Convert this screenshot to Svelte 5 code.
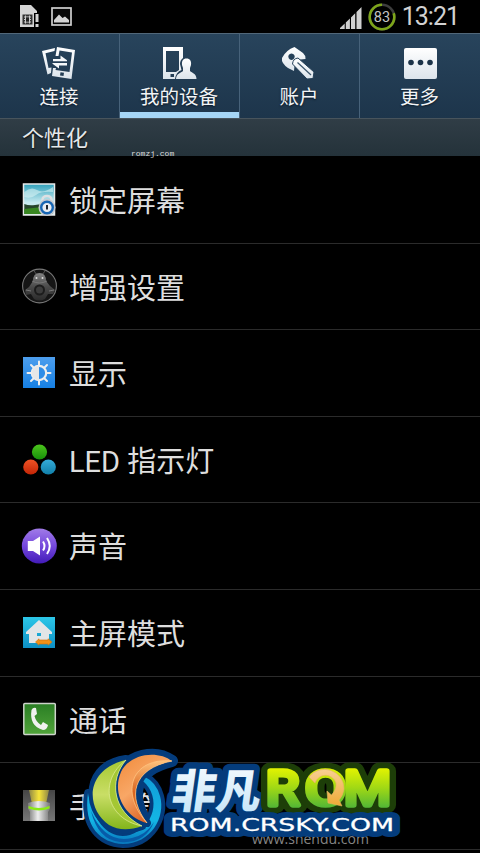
<script>
  const tabs = [
    { icon: "connect", label: "连接" },
    { icon: "device", label: "我的设备" },
    { icon: "account", label: "账户" },
    { icon: "more", label: "更多" }
  ];
  const items = [
    { icon: "lock", label: "锁定屏幕" },
    { icon: "enhance", label: "增强设置" },
    { icon: "display", label: "显示" },
    { icon: "led", label: "LED 指示灯" },
    { icon: "sound", label: "声音" },
    { icon: "home", label: "主屏模式" },
    { icon: "call", label: "通话" },
    { icon: "torch", label: "手电筒" }
  ];
  const letters = [
    { char: "R", x: 266, width: 33 },
    { char: "O", x: 305, width: 41 },
    { char: "M", x: 344, width: 47 }
  ];
  let active = $state("device");
</script>

<div class="screen">
  <header class="status">
    <div class="notes">
      <svg width="19" height="23" viewBox="0 0 19 23">
        <path d="M0 0H11L17 6V8H14V22H0Z" fill="#d4d4d4" />
        <rect x="2.5" y="9.500" width="10" height="10" fill="#333" />
        <path d="M4 12h7M4 14.500h7M4 17h7M5.500 10.500v8M9.500 10.500v8" stroke="#ccc" />
        <rect x="6" y="12.500" width="3" height="4" fill="#222" />
        <path d="M15.500 9h3v8h-3zM15.500 19h3v3h-3z" fill="#d4d4d4" />
      </svg>
      <svg width="21" height="19" viewBox="0 0 21 19">
        <rect x="1" y="1" width="19" height="17" fill="#080808" stroke="#cfcfcf" stroke-width="1.700" />
        <path d="M3 15.500V13L8 7.500L11.500 11L14 9.500L18 13V15.500Z" fill="#d4d4d4" />
      </svg>
    </div>
    <div class="right">
      <svg width="22" height="22" viewBox="0 0 22 22" fill="#d0d0d0">
        <path d="M0 22V21L4.700 16.500V22ZM5.800 22V15.500L9.900 11.500V22ZM11 22V10.500L15.200 6.300V22ZM16.500 22V5L21.500 0V22Z" />
      </svg>
      <svg class="battery" width="28" height="28" viewBox="0 0 28 28">
        <circle cx="14" cy="14" r="12.300" fill="none" stroke="#3d3d3d" stroke-width="2.500" />
        <circle cx="14" cy="14" r="12.300" fill="none" stroke="#7da51a" stroke-width="2.600" pathLength="100" stroke-dasharray="80 20" stroke-dashoffset="-20" transform="rotate(-90 14 14)" />
        <text x="14" y="19" text-anchor="middle">83</text>
      </svg>
      <time>13:21</time>
    </div>
  </header>

  <nav>
    {#each tabs as tab}
      <button class:active={active === tab.icon} onclick={() => (active = tab.icon)}>
        <svg width="38" height="36" viewBox="0 0 38 36">
          <defs>
            <linearGradient id="metal-{tab.icon}" x2="0" y2="1">
              <stop stop-color="#fff" />
              <stop offset="1" stop-color="#dce4eb" />
            </linearGradient>
          </defs>
          {#if tab.icon === "connect"}
            <path fill="url(#metal-connect)" d="M2 5L15 2L14.500 5L5.500 7.200L8.500 22L11.500 21.500L11 27L7.500 28.500Z" />
            <path fill="url(#metal-connect)" fill-rule="evenodd" d="M17 1L35 4L31.500 33L12 30L13 22H16L15.500 24L29.500 26L32 6.500L19.500 4.500L18.500 10H15.500ZM20.500 26.200L20 29.500L23.500 30L24 26.700Z" />
            <path fill="#f5f8fa" d="M13 13H20.500V9.500L27 14.200V15.200H13ZM27 17V19.500H19V22.500L12.500 17.800V17Z" />
          {:else if tab.icon === "device"}
            <path fill="url(#metal-device)" fill-rule="evenodd" d="M3 1H23V12Q20 14 20 18L21.500 24Q16 26 15 33H3ZM6 5V26H16L19 24V5ZM10.500 28V31H14V28Z" />
            <path fill="url(#metal-device)" d="M26.500 12.500C30 12.500 31.500 15 31 19L30 22V25C32 27 36.500 27.500 36.500 33H16C16 27.500 21 27 23 25V22L22 19C21.500 15 23 12.500 26.500 12.500Z" />
          {:else if tab.icon === "account"}
            <path fill="url(#metal-account)" fill-rule="evenodd" d="M14.500 1L23 7Q25.500 9 25.500 13L15 14L14 25L8 22Q1 17 2 12Q6 4 14.500 1ZM11.500 7.500A3.200 3.200 0 1 0 11.510 7.500Z" />
            <path fill="url(#metal-account)" stroke="#244058" stroke-width="1" d="M12.500 18Q13 12.500 18 12L34 26L33 32.500L27 33Z" />
            <path d="M17.500 16.500L31 29" stroke="#3c566b" stroke-width="1.200" />
          {:else}
            <rect x="3" y="2" width="33" height="31" rx="2" fill="url(#metal-more)" />
            <g fill="#1c3348">
              <circle cx="10" cy="16.500" r="2.800" />
              <circle cx="19.500" cy="16.500" r="2.800" />
              <circle cx="29" cy="16.500" r="2.800" />
            </g>
          {/if}
        </svg>
        <span>{tab.label}</span>
      </button>
    {/each}
  </nav>

  <h2>个性化</h2>

  <ul>
    {#each items as item}
      <li>
        <svg width="36" height="36" viewBox="0 0 36 36">
          {#if item.icon === "lock"}
            <defs>
              <linearGradient id="sky" x2="0" y2="1">
                <stop stop-color="#2fa0ba" />
                <stop offset=".6" stop-color="#c8ebf0" />
              </linearGradient>
            </defs>
            <rect x="2.500" y="2" width="31" height="31" fill="url(#sky)" stroke="#e8eaea" stroke-width="1.500" />
            <path d="M3.300 10Q10 4 16 8T32 5V10Q20 9 15 13T3.300 15Z" fill="#d8f3f5" opacity=".6" />
            <path d="M3.300 22Q8 24 14 23T32 22V32H3.300Z" fill="#27452b" />
            <path d="M3.300 27L21 25V32H3.300Z" fill="#388621" />
            <path d="M21.500 20V17.500Q22 14 26 14T30.500 17.500V20" fill="none" stroke="#dcdfe2" stroke-width="2.500" />
            <circle cx="26" cy="25.500" r="8.500" fill="#c5c9cf" />
            <circle cx="26" cy="25.500" r="5.800" fill="#e9edf2" stroke="#1766b4" stroke-width="2.400" />
            <path d="M26 23v4.500" stroke="#1c2531" stroke-width="2" />
          {:else if item.icon === "enhance"}
            <defs>
              <linearGradient id="bot" x2="0" y2="1">
                <stop stop-color="#858585" />
                <stop offset=".5" stop-color="#4a4a4a" />
                <stop offset="1" stop-color="#2b2b2b" />
              </linearGradient>
            </defs>
            <circle cx="18.500" cy="18" r="16.900" fill="#151515" stroke="#777" stroke-width="1.100" />
            <path d="M13 3l3 4M24 3l-3 4" stroke="#555" />
            <path d="M12 13Q12 5 18.500 5T25 13L29 18L34 22L32 26L27 26L24 31Q18 34 13 31L10 26L5 27L4 22L8 19Z" fill="url(#bot)" />
            <path d="M11 13Q18 17 26 13M5 22l5 1M28 23l5-1" stroke="#777" fill="none" />
            <circle cx="18.500" cy="22" r="4.500" fill="#3c3c3c" stroke="#1c1c1c" stroke-width="2" />
            <circle cx="15.500" cy="10" r="1" fill="#ddd" />
            <circle cx="21.500" cy="10" r="1" fill="#ddd" />
          {:else if item.icon === "display"}
            <defs>
              <linearGradient id="blue" x2="0" y2="1">
                <stop stop-color="#4d9eed" />
                <stop offset="1" stop-color="#1680e4" />
              </linearGradient>
            </defs>
            <rect x="2" y="2" width="32" height="31" fill="url(#blue)" />
            <path d="M18 6.500V29.500M6.500 18H29.500M10 10L26 26M10 26L26 10" stroke="#eee" stroke-width="2" stroke-linecap="round" />
            <circle cx="18" cy="18" r="7.200" fill="#2f8de7" stroke="#eee" stroke-width="2.200" />
            <path d="M18 11A7 7 0 0 0 18 25Z" fill="#e7e7e7" />
          {:else if item.icon === "led"}
            <defs>
              <linearGradient id="led-g" x2="0" y2="1"><stop stop-color="#4cc41c" /><stop offset="1" stop-color="#16910a" /></linearGradient>
              <linearGradient id="led-r" x2="0" y2="1"><stop stop-color="#ef5326" /><stop offset="1" stop-color="#c32506" /></linearGradient>
              <linearGradient id="led-b" x2="0" y2="1"><stop stop-color="#35acd9" /><stop offset="1" stop-color="#107fa9" /></linearGradient>
            </defs>
            <circle cx="18.500" cy="10" r="7.600" fill="url(#led-g)" />
            <circle cx="9.800" cy="25" r="7.600" fill="url(#led-r)" />
            <circle cx="27.300" cy="25" r="7.600" fill="url(#led-b)" />
          {:else if item.icon === "sound"}
            <defs>
              <linearGradient id="purple" x2="0" y2="1"><stop stop-color="#a17be8" /><stop offset=".5" stop-color="#7548dc" /><stop offset="1" stop-color="#421bb8" /></linearGradient>
            </defs>
            <circle cx="18.300" cy="18" r="17.500" fill="url(#purple)" />
            <path d="M6.800 13H12L19 8.500V27.500L12 23H6.800Z" fill="#fff" />
            <path d="M22 13.500Q25 18 22 22.500M26 10Q31.500 18 26 26" fill="none" stroke="#fff" stroke-width="2" />
          {:else if item.icon === "home"}
            <defs>
              <linearGradient id="cyan" x2="0" y2="1"><stop stop-color="#2cc7e8" /><stop offset="1" stop-color="#0d8fc4" /></linearGradient>
            </defs>
            <rect x="2" y="2" width="32" height="31" fill="url(#cyan)" />
            <path fill="#e3e5e7" fill-rule="evenodd" d="M18 5L31 17V19H28V28H8V19H5V17ZM16 18V21H20V18Z" />
            <path d="M14.500 27L18 23.800V25H27V23.800L31 27L27 30.200V29H18V30.200Z" fill="#f09119" stroke="#d47108" stroke-width=".6" />
          {:else if item.icon === "call"}
            <defs>
              <linearGradient id="green" x2="0" y2="1"><stop stop-color="#2a7e24" /><stop offset="1" stop-color="#51a43a" /></linearGradient>
            </defs>
            <rect x="2.800" y="2.500" width="31.500" height="31" rx="1" fill="url(#green)" stroke="#ccd2c9" stroke-width="1.500" />
            <path d="M10.500 9Q12 6 15 7L16 13L13.500 15Q15 21 20 24L22 21L27 24Q26 29 22 29Q8 25 10.500 9Z" fill="#f1f1ef" />
          {:else}
            <defs>
              <linearGradient id="grey" x2="0" y2="1"><stop stop-color="#454545" /><stop offset="1" stop-color="#777" /></linearGradient>
              <linearGradient id="tube"><stop stop-color="#777" /><stop offset=".45" stop-color="#eee" /><stop offset="1" stop-color="#777" /></linearGradient>
              <linearGradient id="beam"><stop stop-color="#8f8746" /><stop offset=".5" stop-color="#f7e53a" /><stop offset="1" stop-color="#8f8746" /></linearGradient>
            </defs>
            <rect x="2" y="2" width="32" height="31" fill="url(#grey)" />
            <path d="M8 2H28L25 16H11Z" fill="url(#beam)" />
            <path d="M7 15Q18 11 29 15V21L27 24V33H9V24L7 21Z" fill="url(#tube)" />
            <path d="M7.500 18Q18 22 28.500 18V20.500Q18 24.500 7.500 20.500Z" fill="#8be916" />
          {/if}
        </svg>
        <span>{item.label}</span>
      </li>
    {/each}
  </ul>

  <span class="mark romzj">romzj.com</span>
  <span class="mark shendu">www.shendu.com</span>

  <svg class="logo" width="330" height="113" viewBox="76 740 330 113">
    <defs>
      <linearGradient id="lime" x2="0" y2="1"><stop stop-color="#a6c832" /><stop offset=".5" stop-color="#c9de66" /><stop offset="1" stop-color="#83b51b" /></linearGradient>
      <linearGradient id="orange" x2=".6" y2="1"><stop stop-color="#f08a3a" /><stop offset=".5" stop-color="#f8a766" /><stop offset="1" stop-color="#d95b1d" /></linearGradient>
      <linearGradient id="flame" x2="0" y2="1"><stop stop-color="#ffc27c" /><stop offset=".5" stop-color="#d9641f" /><stop offset="1" stop-color="#ee8738" /></linearGradient>
      <linearGradient id="ring" x2="0" y2="1"><stop stop-color="#119fd9" /><stop offset=".65" stop-color="#13b5e5" /><stop offset="1" stop-color="#0878bd" /></linearGradient>
      <linearGradient id="ice" x2="0" y2="1"><stop stop-color="#fff" /><stop offset="1" stop-color="#bfe2f8" /></linearGradient>
      <linearGradient id="rom" gradientUnits="userSpaceOnUse" x1="0" y1="768" x2="0" y2="808"><stop stop-color="#e4f400" /><stop offset=".5" stop-color="#a0d815" /><stop offset="1" stop-color="#51b636" /></linearGradient>
      <linearGradient id="gold" x2="0" y2="1"><stop stop-color="#f8cf94" /><stop offset="1" stop-color="#efaa35" /></linearGradient>
    </defs>

    <g fill="#043c7c" stroke="#043c7c" stroke-linejoin="round">
      <path d="M88 793C83 827 101 843 123 844C151 844 166 817 160 796Q156 782 145 777L143 781C162 798 154 827 130 835C110 840 94 824 88 793Z" stroke-width="8" />
      <path d="M126 761C88 766 86 806 111 826Q126 833 143 826L122 802Q113 779 126 761Z" stroke-width="12" />
      <path d="M172 761C155 749 128 755 120 774C111 797 127 818 147 823C130 797 132 771 172 761Z" stroke-width="12" />
    </g>
    <path d="M88 793C83 827 101 843 123 844C151 844 166 817 160 796Q156 782 145 777L143 781C162 798 154 827 130 835C110 840 94 824 88 793Z" fill="url(#ring)" />
    <path d="M91 811Q105 844 132 838Q146 835 154 822Q145 844 120 842Q98 840 91 811Z" fill="#075ba8" />
    <g fill="none" stroke="#043c7c" stroke-width="8" stroke-linejoin="round">
      <path d="M126 760C85 769 85 808 109 825Q123 833 142 826C112 811 109 780 126 760Z" />
      <path d="M172 761C158 750 130 753 121 772C111 795 127 818 147 823C127 797 132 769 172 761Z" />
    </g>
    <path d="M126 760C85 769 85 808 109 825Q123 833 142 826C112 811 109 780 126 760Z" fill="url(#lime)" />
    <path d="M126 760C98 781 106 819 142 826C112 811 109 780 126 760Z" fill="#a4c733" stroke="#e2ee9c" stroke-width=".7" />
    <path d="M172 761C158 750 130 753 121 772C111 795 127 818 147 823C127 797 132 769 172 761Z" fill="url(#orange)" />
    <path d="M172 761C132 757 119 792 147 823C127 797 132 769 172 761Z" fill="url(#flame)" stroke="#ffc886" stroke-width=".7" />

    <g class="cn" transform="translate(170 807.500) skewX(-8)">
      <text x="0" y="0" textLength="89" lengthAdjust="spacingAndGlyphs" fill="#043c7c" stroke="#043c7c" stroke-width="13">非凡</text>
      <text x="0" y="0" textLength="89" lengthAdjust="spacingAndGlyphs" fill="url(#ice)">非凡</text>
    </g>
    <g class="rom">
      {#each letters as letter}
        <text x={letter.x} y="805" textLength={letter.width} lengthAdjust="spacingAndGlyphs" fill="#1d3e08" stroke="#1d3e08" stroke-width="17">{letter.char}</text>
      {/each}
      {#each letters as letter}
        <text x={letter.x} y="805" textLength={letter.width} lengthAdjust="spacingAndGlyphs" fill="url(#rom)" stroke="url(#rom)" stroke-width="5.500">{letter.char}</text>
      {/each}
    </g>
    <path d="M309 777A19.500 19.500 0 0 1 344 789Q343 796 339 800L342 806L328 803L327 791L331.500 795Q337 789 336 783A11 11 0 0 0 315 783Z" fill="url(#gold)" stroke="#e2b65f" stroke-width=".6" />
    <g class="site">
      <text x="170" y="831" textLength="224" lengthAdjust="spacingAndGlyphs" stroke="#043c7c" fill="#043c7c" stroke-width="12">ROM.CRSKY.COM</text>
      <text x="170" y="831" textLength="224" lengthAdjust="spacingAndGlyphs" fill="#fff" stroke="#fff" stroke-width=".3">ROM.CRSKY.COM</text>
    </g>
  </svg>
</div>

<style>
  :global(body) {
    background: #000;
    overflow: hidden;
  }
  .screen {
    position: relative;
    width: 480px;
    height: 853px;
    overflow: hidden;
    background: #000;
    color: #dedede;
    font-family: Roboto, "Noto Sans CJK SC", sans-serif;
  }
  .status {
    display: flex;
    justify-content: space-between;
    height: 33px;
    padding: 0 22px 0 20px;
  }
  .notes,
  .right {
    display: flex;
    align-items: center;
  }
  .notes {
    gap: 12px;
  }
  .right {
    gap: 6px;
  }
  .right svg:first-child {
    margin-top: 2px;
  }
  .battery {
    margin-top: 1px;
  }
  .battery text {
    fill: #c4c4c4;
    font-size: 14.5px;
  }
  time {
    font-size: 25px;
    line-height: 32px;
    color: #d2d2d2;
    letter-spacing: -1px;
    margin-right: -1px;
  }
  nav {
    display: grid;
    grid-template-columns: repeat(4, 1fr);
    height: 85px;
    box-sizing: border-box;
    border-top: 1px solid #516779;
    background: linear-gradient(#28445c, #1d354b);
  }
  button {
    display: flex;
    flex-direction: column;
    align-items: center;
    height: 84px;
    padding: 12px 1px 0 0;
    border: 0;
    border-right: 1px solid #47627a;
    background: none;
    color: #f2f4f6;
    font: 19.5px/32px Roboto, "Noto Sans CJK SC", sans-serif;
    text-shadow: 0 1px 2px #0a1724;
  }
  button:last-child {
    border-right: 0;
  }
  button.active {
    box-shadow: inset 0 -6px #a5d5f5;
  }
  button span {
    white-space: nowrap;
  }
  h2 {
    height: 38px;
    margin: 0;
    padding-left: 22px;
    box-sizing: border-box;
    border-top: 1px solid #48545c;
    background: linear-gradient(#303d46, #24323a);
    color: #e4e7e9;
    font-size: 22px;
    font-weight: 400;
    line-height: 39px;
    text-shadow: 0 1px 2px #000;
  }
  ul {
    margin: 1px 0 0;
    padding: 0;
    list-style: none;
  }
  li {
    display: flex;
    align-items: center;
    gap: 12px;
    height: 86.6px;
    padding-left: 21px;
    box-sizing: border-box;
    border-bottom: 1px solid #2b2b2b;
    font-size: 29px;
  }
  li span {
    padding-bottom: 1.5px;
  }
  .mark {
    position: absolute;
    white-space: nowrap;
  }
  .romzj {
    left: 131px;
    top: 149px;
    color: #ddd;
    font: 8px/10px "Liberation Mono", monospace;
  }
  .shendu {
    left: 252px;
    top: 830px;
    color: #858585;
    font: 14px/17px "Open Sans", sans-serif;
  }
  .logo {
    position: absolute;
    left: 76px;
    top: 740px;
  }
  .cn text {
    font: 900 46px "Noto Sans CJK SC", sans-serif;
    stroke-linejoin: round;
  }
  .rom text {
    font: 400 48px Roboto, sans-serif;
    stroke-linejoin: round;
  }
  .site text {
    font: 400 18.5px "DejaVu Sans", sans-serif;
    stroke-linejoin: round;
  }
</style>
